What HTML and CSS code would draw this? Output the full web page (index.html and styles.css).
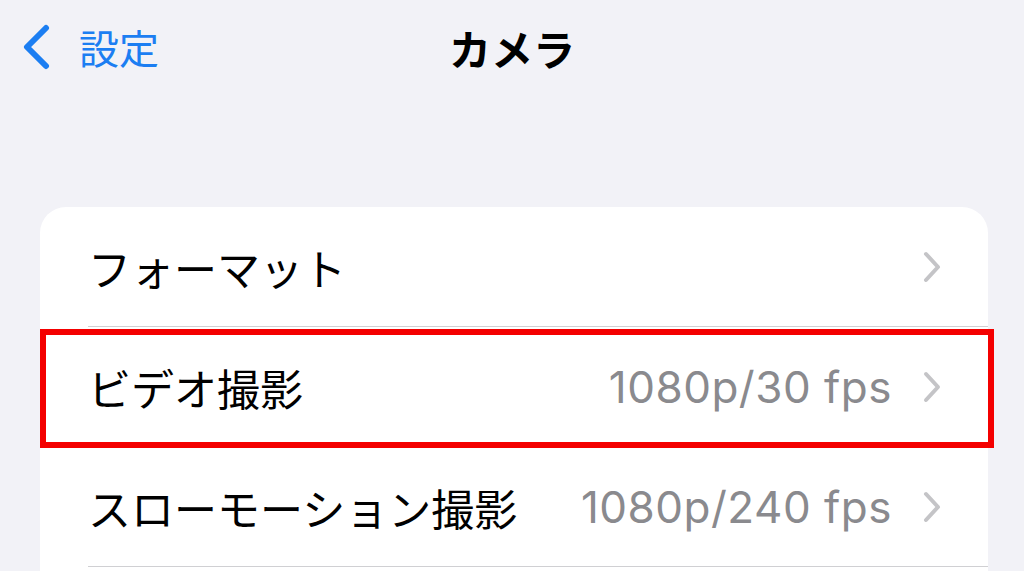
FILE: index.html
```html
<!DOCTYPE html>
<html lang="ja">
<head>
  <meta charset="UTF-8" />
  <meta name="viewport" content="width=device-width, initial-scale=1.0"/>
  <title>カメラ</title>
  <link rel="stylesheet" href="styles.css">
</head>
<body>
  <!-- Navigation bar -->
  <header class="nav">
    <a class="back" href="#">
      <svg class="back-icon" width="30" height="46" viewBox="0 0 30 46">
        <polyline points="25,4 6,23 25,42" fill="none" stroke="#1c7ef2" stroke-width="6" stroke-linecap="round" stroke-linejoin="round"/>
      </svg>
      <span>設定</span>
    </a>
    <h1 class="title">カメラ</h1>
    <div></div>
  </header>

  <main class="content">
    <div class="card">
      <div class="row">
        <div class="row-inner">
          <span class="label">フォーマット</span>
          <span class="value"></span>
          <svg class="chev" width="20" height="32" viewBox="0 0 20 32"><polyline points="4,3 16,16 4,29" fill="none" stroke="#c4c4c7" stroke-width="4" stroke-linecap="round" stroke-linejoin="round"/></svg>
        </div>
      </div>
      <div class="row highlighted">
        <div class="row-inner">
          <span class="label">ビデオ撮影</span>
          <span class="value">1080p/30 fps</span>
          <svg class="chev" width="20" height="32" viewBox="0 0 20 32"><polyline points="4,3 16,16 4,29" fill="none" stroke="#c4c4c7" stroke-width="4" stroke-linecap="round" stroke-linejoin="round"/></svg>
        </div>
      </div>
      <div class="row">
        <div class="row-inner">
          <span class="label">スローモーション撮影</span>
          <span class="value">1080p/240 fps</span>
          <svg class="chev" width="20" height="32" viewBox="0 0 20 32"><polyline points="4,3 16,16 4,29" fill="none" stroke="#c4c4c7" stroke-width="4" stroke-linecap="round" stroke-linejoin="round"/></svg>
        </div>
      </div>
      <div class="row">
        <div class="row-inner">
          <span class="label">&nbsp;</span>
        </div>
      </div>
    </div>
  </main>
</body>
</html>
```

FILE: styles.css
```css
body {
  margin: 0;
  padding: 0;
  background: #f2f2f7;
  color: #000;
  font-family: "Noto Sans CJK JP", "Noto Sans", sans-serif;
  overflow: hidden;
}
.nav {
  height: 94px;
  display: grid;
  grid-template-columns: 1fr auto 1fr;
  align-items: center;
}
.back {
  display: flex;
  align-items: center;
  gap: 28px;
  padding-left: 21px;
  color: #1c7ef2;
  text-decoration: none;
  font-size: 40px;
}
.back-icon {
  display: block;
}
.title {
  margin: 0;
  font-size: 42px;
  font-weight: 700;
}
.content {
  padding: 113px 36px 0 40px;
}
.card {
  background: #fff;
  border-radius: 26px;
}
.row {
  position: relative;
  padding-left: 48px;
}
.row-inner {
  height: 119px;
  display: flex;
  align-items: center;
  padding-right: 46px;
  border-bottom: 1px solid #d0d0d3;
}
.label {
  flex: 1;
  font-size: 43px;
  white-space: nowrap;
}
.value {
  font-family: "Inter", "Liberation Sans", sans-serif;
  font-size: 44px;
  color: #8a8a8e;
  margin-right: 30px;
  letter-spacing: 0.5px;
}
.chev {
  display: block;
}
.highlighted::after {
  content: "";
  position: absolute;
  left: 0;
  right: -6px;
  top: 2px;
  bottom: -1px;
  border: 6px solid #f40000;
  pointer-events: none;
}
```
